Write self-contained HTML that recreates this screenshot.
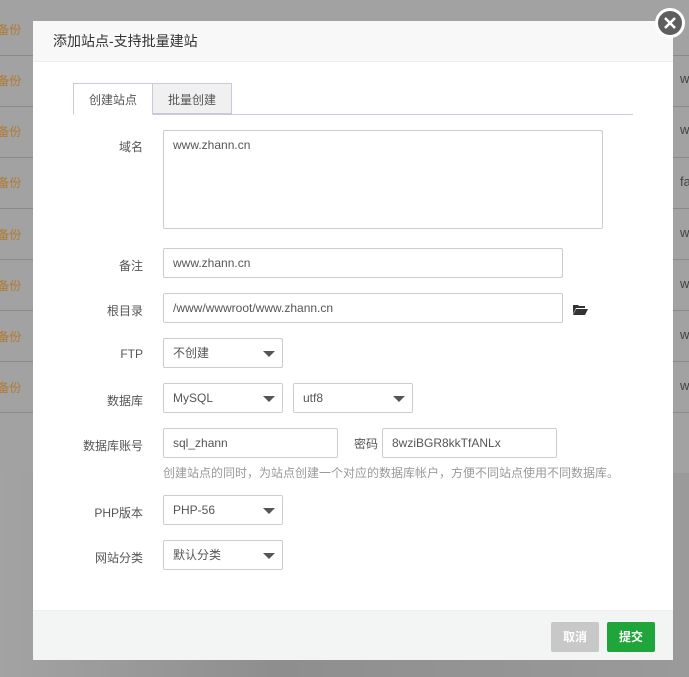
<!DOCTYPE html>
<html><head><meta charset="utf-8"><style>
*{box-sizing:border-box;margin:0;padding:0}
body{width:689px;height:677px;overflow:hidden;position:relative;font-family:"Liberation Sans","Noto Sans CJK SC",sans-serif;font-size:12px;color:#555;background:linear-gradient(90deg,#a3a3a3,#8e8e8e 40%,#9a9a9a)}
.bgrows{position:absolute;left:0;top:0;width:689px;height:473px;background:#a2a2a2}
.row{position:absolute;left:0;width:689px;height:1px;background:#8a8a8a}
.bk{position:absolute;left:0;color:#b07a30;font-size:12px}
.rt{position:absolute;left:680px;color:#444;font-size:13px}
.modal{position:absolute;left:33px;top:21px;width:640px;height:639px;background:#fff}
.hd{height:41px;background:#f8f8f8;border-bottom:1px solid #eee;padding:0 20px;line-height:41px;font-size:14px;color:#333}
.ft{position:absolute;left:0;bottom:0;width:640px;height:50px;background:#f3f5f5;border-top:1px solid #eee}
.btn{position:absolute;top:11px;width:48px;height:30px;border-radius:2px;color:#fff;font-size:12px;text-align:center;line-height:30px;font-weight:bold}
.a{position:absolute}
.lbl{position:absolute;width:110px;text-align:right;color:#555;font-size:12px}
.in{position:absolute;border:1px solid #ccc;border-radius:2px;height:30px;line-height:28px;padding-left:9px;color:#555;font-size:12px;background:#fff}
.sel:after{content:"";position:absolute;right:7px;top:12px;border-left:6px solid transparent;border-right:6px solid transparent;border-top:6px solid #555}
.tab{position:absolute;top:62px;height:32px;line-height:32px;text-align:center;border:1px solid #ccc;font-size:12px}
</style></head><body>
<div class="bgrows"></div>
<div class="row" style="top:55px"></div><div class="row" style="top:106px"></div><div class="row" style="top:157px"></div><div class="row" style="top:208px"></div><div class="row" style="top:259px"></div><div class="row" style="top:310px"></div><div class="row" style="top:361px"></div><div class="row" style="top:412px"></div>
<div class="bk" style="top:21px;left:-6px">t备份</div><div class="bk" style="top:72px;left:-6px">t备份</div><div class="bk" style="top:123px;left:-6px">t备份</div><div class="bk" style="top:174px;left:-6px">t备份</div><div class="bk" style="top:226px;left:-6px">t备份</div><div class="bk" style="top:277px;left:-6px">t备份</div><div class="bk" style="top:328px;left:-6px">t备份</div><div class="bk" style="top:379px;left:-6px">t备份</div>
<div class="rt" style="top:71px">w</div><div class="rt" style="top:122px">w</div><div class="rt" style="top:174px">fa</div><div class="rt" style="top:225px">w</div><div class="rt" style="top:276px">w</div><div class="rt" style="top:327px">w</div><div class="rt" style="top:378px">w</div>
<div class="modal">
<div class="hd">添加站点-支持批量建站</div>
<div class="a" style="left:40px;top:93px;width:560px;height:1px;background:#ccc8dc"></div>
<div class="tab" style="left:40px;width:80px;background:#fff;border-color:#ccc8dc;border-bottom-color:#fff">创建站点</div>
<div class="tab" style="left:119px;width:80px;background:#f0f0f0;border-color:#ccc8dc;height:31px">批量创建</div>
<div class="lbl" style="left:0;top:117px">域名</div>
<div class="in" style="left:130px;top:109px;width:440px;height:99px;line-height:16px;padding-top:6px">www.zhann.cn</div>
<div class="lbl" style="left:0;top:236px">备注</div>
<div class="in" style="left:130px;top:227px;width:400px">www.zhann.cn</div>
<div class="lbl" style="left:0;top:281px">根目录</div>
<div class="in" style="left:130px;top:272px;width:400px">/www/wwwroot/www.zhann.cn</div>
<svg class="a" style="left:540px;top:283px" width="15" height="11" viewBox="0 0 15 11"><path d="M0 1h5l1 1h6v2H3L0 10z" fill="#333"/><path d="M3 5h12l-3 6H0z" fill="#333"/></svg>
<div class="lbl" style="left:0;top:326px">FTP</div>
<div class="in sel" style="left:130px;top:317px;width:120px">不创建</div>
<div class="lbl" style="left:0;top:371px">数据库</div>
<div class="in sel" style="left:130px;top:362px;width:120px">MySQL</div>
<div class="in sel" style="left:260px;top:362px;width:120px">utf8</div>
<div class="lbl" style="left:0;top:416px">数据库账号</div>
<div class="in" style="left:130px;top:407px;width:175px">sql_zhann</div>
<div class="a" style="left:321px;top:414px">密码</div>
<div class="in" style="left:349px;top:407px;width:175px">8wziBGR8kkTfANLx</div>
<div class="a" style="left:130px;top:443px;color:#999">创建站点的同时，为站点创建一个对应的数据库帐户，方便不同站点使用不同数据库。</div>
<div class="lbl" style="left:0;top:483px">PHP版本</div>
<div class="in sel" style="left:130px;top:474px;width:120px">PHP-56</div>
<div class="lbl" style="left:0;top:528px">网站分类</div>
<div class="in sel" style="left:130px;top:519px;width:120px">默认分类</div>
<div class="ft">
<div class="btn" style="left:518px;background:#c8c8c8">取消</div>
<div class="btn" style="left:574px;background:#20a53a">提交</div>
</div>
</div>
<div class="a" style="left:655px;top:8px;width:30px;height:30px;border-radius:50%;background:#5e5e5e;border:3px solid #fff"></div>
<svg class="a" style="left:662px;top:15px" width="16" height="16" viewBox="0 0 16 16"><path d="M3 3L13 13M13 3L3 13" stroke="#fff" stroke-width="2.5"/></svg>
</body></html>
